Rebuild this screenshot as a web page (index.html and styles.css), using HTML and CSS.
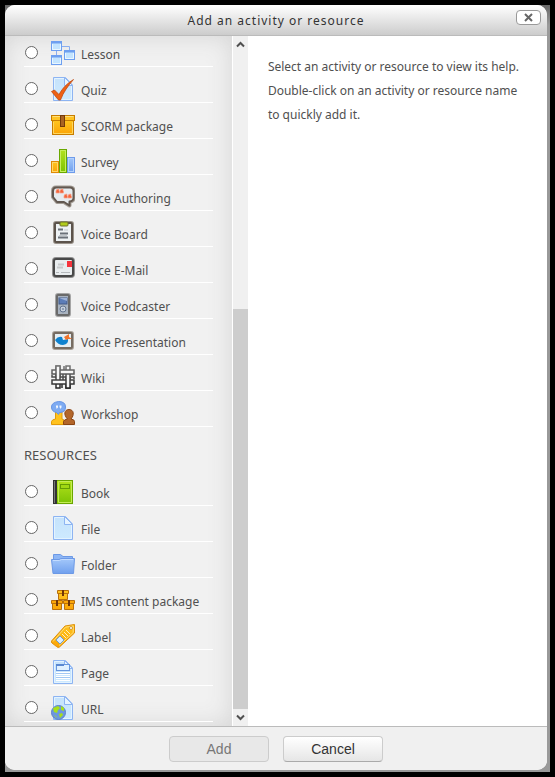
FILE: index.html
```html
<!DOCTYPE html>
<html lang="en">

<head>
    <meta charset="UTF-8">
    <meta name="viewport" content="width=device-width, initial-scale=1.0">
    <title>Add an activity or resource</title>
    <link rel="stylesheet" href="styles.css">
</head>

<body>
    <svg class="defs" aria-hidden="true">
        <defs>
            <linearGradient id="blue" x2="0" y2="1">
                <stop offset="0" stop-color="#c5e2fb" />
                <stop offset="1" stop-color="#cdeaff" />
            </linearGradient>
            <linearGradient id="orange" x2="0" y2="1">
                <stop offset="0" stop-color="#ffc51f" />
                <stop offset="1" stop-color="#fba305" />
            </linearGradient>
            <linearGradient id="green" x2="0" y2="1">
                <stop offset="0" stop-color="#b4e31c" />
                <stop offset="1" stop-color="#7cc204" />
            </linearGradient>
            <linearGradient id="folder" x2="0" y2="1">
                <stop offset="0" stop-color="#a4c8fa" />
                <stop offset="1" stop-color="#70a0ee" />
            </linearGradient>
            <linearGradient id="weave" gradientUnits="userSpaceOnUse" x1="0" y1="0" x2="0" y2="24">
                <stop offset="0" stop-color="#777" />
                <stop offset="1" stop-color="#222" />
            </linearGradient>
            <g id="sheet">
                <path d="M2.500.5H14.500L21.500 8V23.500H2.500Z" fill="url(#blue)" stroke="#8db4f2" />
                <path d="M3.500 1.500H14M3.500 1.500V22.500H20.500V9" fill="none" stroke="#e3f3ff" />
                <path d="M13.500.5V8.500H21.500Z" fill="#e6f4ff" stroke="#8db4f2" />
            </g>
            <g id="window">
                <rect x=".5" y=".5" width="10" height="9" fill="#c3e4ff" stroke="#6e9ff0" />
                <path d="M1 1.500H10" stroke="#6e9ff0" stroke-width="2" />
                <path d="M1.500 3V8.500H9.500V3" fill="none" stroke="#e9f6ff" />
            </g>
        </defs>
    </svg>

    <div class="shade">
        <form class="dialog">
            <header class="titlebar">
                <h1>Add an activity or resource</h1>
                <button type="button" class="close" aria-label="Close">
                    <svg width="9" height="9" viewBox="0 0 9 9">
                        <path d="M1 1L8 8M8 1L1 8" stroke="#666" stroke-width="2" />
                    </svg>
                </button>
            </header>

            <main class="chooser">
                <div class="pane">
                    <div class="options">
                        <ul>
                            <li><label>
                                <input type="radio" name="module">
                                <svg class="icon" viewBox="0 0 24 24">
                                    <path d="M11 5.500H18.500V9M5.500 10V14" fill="none" stroke="#8aaef0" />
                                    <use href="#window" />
                                    <use href="#window" x="13" y="9" />
                                    <use href="#window" y="14" />
                                </svg>
                                <span>Lesson</span>
                            </label></li>
                            <li><label>
                                <input type="radio" name="module">
                                <svg class="icon" viewBox="0 0 24 24">
                                    <use href="#sheet" />
                                    <path d="M.5 14.500L3.500 13L8 17.500C12 10.500 16 6.500 22.500 2.500C17 9 12.500 15 9.500 23H7.500Z" fill="#ee6115" stroke="#b9440a" stroke-width=".7" />
                                </svg>
                                <span>Quiz</span>
                            </label></li>
                            <li><label>
                                <input type="radio" name="module">
                                <svg class="icon" viewBox="0 0 24 24">
                                    <rect x="1.500" y="7.500" width="21" height="14" fill="url(#orange)" stroke="#c77d00" />
                                    <path d="M2.500 9V20.500H21.500V9" fill="none" stroke="#ffd760" />
                                    <rect x=".5" y="2.500" width="23" height="5" fill="#ffc425" stroke="#c77d00" />
                                    <path d="M1.500 3.500H22.500" stroke="#ffe07c" />
                                    <rect x="9.500" y="2.500" width="4" height="11" fill="#a96322" stroke="#743b0b" />
                                </svg>
                                <span>SCORM package</span>
                            </label></li>
                            <li><label>
                                <input type="radio" name="module">
                                <svg class="icon" viewBox="0 0 24 24">
                                    <rect x=".5" y="12.500" width="7" height="11" fill="url(#orange)" stroke="#e08a04" />
                                    <rect x="1.500" y="13.500" width="5" height="9" fill="none" stroke="#ffd96b" />
                                    <rect x="16.500" y="8.500" width="7" height="15" fill="url(#folder)" stroke="#6e9bea" />
                                    <rect x="17.500" y="9.500" width="5" height="13" fill="none" stroke="#b5d2fc" />
                                    <rect x="8.500" y=".5" width="7" height="23" fill="url(#green)" stroke="#6aa800" />
                                    <rect x="9.500" y="1.500" width="5" height="21" fill="none" stroke="#c7ef5b" />
                                </svg>
                                <span>Survey</span>
                            </label></li>
                            <li><label>
                                <input type="radio" name="module">
                                <svg class="icon" viewBox="0 0 24 24">
                                    <path d="M5 2.500H19Q22.500 2.500 22.500 6V13Q22.500 16 18.500 16.500V20.500L13 17H6L2 12V6Q2 2.500 5 2.500Z" fill="#e6ebee" stroke="#a39c94" stroke-width="4" stroke-linejoin="round" />
                                    <path d="M5 2.500H19Q22.500 2.500 22.500 6V13Q22.500 16 18.500 16.500V20.500L13 17H6L2 12V6Q2 2.500 5 2.500Z" fill="#e6ebee" stroke="#625850" stroke-width="2" stroke-linejoin="round" />
                                    <path d="M5 6Q5 4 8 4V6H8.500V8H5ZM9 6Q9 4 12 4V6H12.500V8H9ZM13 11Q13 9 16 9V11H16.500V13H13ZM17 11Q17 9 20 9V11H20.500V13H17Z" fill="#f4663c" stroke="#f7a58c" stroke-width=".7" />
                                </svg>
                                <span>Voice Authoring</span>
                            </label></li>
                            <li><label>
                                <input type="radio" name="module">
                                <svg class="icon" viewBox="0 0 24 24">
                                    <rect x="4" y="2" width="17" height="19" rx="1" fill="#eef2f4" stroke="#9a938b" stroke-width="4" />
                                    <rect x="4" y="2" width="17" height="19" rx="1" fill="#eef2f4" stroke="#5c534b" stroke-width="2" />
                                    <rect x="9" y="1" width="8" height="4" rx="1" fill="#b1cc1c" stroke="#6c702e" />
                                    <path d="M7 8.500H12M9 12.500H17M7 16.500H17" stroke="#6a7179" stroke-width="2" />
                                    <path d="M13 9H17M8 14.500H16" stroke="#c0c6cb" />
                                </svg>
                                <span>Voice Board</span>
                            </label></li>
                            <li><label>
                                <input type="radio" name="module">
                                <svg class="icon" viewBox="0 0 24 24">
                                    <rect x="3" y="2" width="19" height="17" rx="2" fill="#e9edef" stroke="#8f8f8f" stroke-width="4" />
                                    <rect x="3" y="2" width="19" height="17" rx="2" fill="#e9edef" stroke="#484848" stroke-width="2" />
                                    <path d="M7 7.500H13M6 10.500H12" stroke="#c6c9cb" stroke-width="2" />
                                    <path d="M5 15.500H8M10 15.500H19" stroke="#b5b9bc" />
                                    <rect x="16" y="4" width="5" height="6" fill="#f5333c" />
                                </svg>
                                <span>Voice E-Mail</span>
                            </label></li>
                            <li><label>
                                <input type="radio" name="module">
                                <svg class="icon" viewBox="0 0 24 24">
                                    <rect x="6" y="2" width="12" height="20" rx="1" fill="#a9b3c0" stroke="#a5a5a5" stroke-width="4" />
                                    <rect x="6" y="2" width="12" height="20" rx="1" fill="#a9b3c0" stroke="#6a6a6a" stroke-width="2" />
                                    <rect x="8" y="5" width="8" height="6" fill="#5c7db8" stroke="#455c88" />
                                    <path d="M8 5L16 8V5Z" fill="#9db2d8" />
                                    <circle cx="12" cy="16" r="3" fill="#c8d1dd" stroke="#62748f" />
                                    <circle cx="12" cy="16" r="1" fill="#7b8ca6" />
                                </svg>
                                <span>Voice Podcaster</span>
                            </label></li>
                            <li><label>
                                <input type="radio" name="module">
                                <svg class="icon" viewBox="0 0 24 24">
                                    <rect x="3" y="4" width="18" height="15" rx="1" fill="#e6eef2" stroke="#aaa39b" stroke-width="4" />
                                    <rect x="3" y="4" width="18" height="15" rx="1" fill="#e6eef2" stroke="#766c62" stroke-width="2" />
                                    <path d="M4 11Q7 7 11 8L12 11L17 10Q18 15 12 16Q7 16 4 11Z" fill="#0e82cf" />
                                    <path d="M13 8L18 5V8L21 10H17L15 11Z" fill="#f2742b" />
                                </svg>
                                <span>Voice Presentation</span>
                            </label></li>
                            <li><label>
                                <input type="radio" name="module">
                                <svg class="icon" viewBox="0 0 24 24">
                                    <g fill="#f8f8f8" stroke="url(#weave)" stroke-width="1.500">
                                        <rect x="5" y="1" width="4" height="22" />
                                        <rect x="15" y="1" width="4" height="22" />
                                        <rect x="1" y="5" width="22" height="4" />
                                        <rect x="1" y="15" width="22" height="4" />
                                        <path d="M5 13V1H9V13" />
                                        <path d="M15 11V23H19V11" />
                                        <path d="M1 10V12H5M9 12H15M19 12H23V14M12 9V15" fill="none" />
                                        <path d="M11 19V23M13 1V5" fill="none" />
                                    </g>
                                </svg>
                                <span>Wiki</span>
                            </label></li>
                            <li><label>
                                <input type="radio" name="module">
                                <svg class="icon" viewBox="0 0 24 24">
                                    <path d="M.5 23.500V20.500Q1 18.500 4.500 18V10H11V18L13 19V23.500Z" fill="#ffc21f" stroke="#e29b09" />
                                    <path d="M12.500 23.500V20.500Q13 18.500 16.500 18C12.500 14 13 8.500 18 8.500S23.500 14 20 18Q23.500 18.500 23.500 20.500V23.500Z" fill="#b3662a" stroke="#8b4513" />
                                    <path d="M7.500.5Q14.500.5 14.500 6T8.500 11.500L7.500 13.500L5.500 11.500Q.5 10.500.5 6T7.500.5Z" fill="#7eabf2" stroke="#6593e4" />
                                    <path d="M5 4.500H7V6.500L5.500 8V6.500H5ZM8.500 4.500H10.500V6.500L9 8V6.500H8.500Z" fill="#f2f8ff" />
                                </svg>
                                <span>Workshop</span>
                            </label></li>
                        </ul>

                        <h2>RESOURCES</h2>
                        <ul>
                            <li><label>
                                <input type="radio" name="module">
                                <svg class="icon" viewBox="0 0 24 24">
                                    <rect x="2.500" y=".5" width="19" height="23" fill="url(#green)" stroke="#6ba600" />
                                    <path d="M7.500 1.500H20.500V22.500H7.500Z" fill="none" stroke="#c4ec55" />
                                    <rect x="2" width="4" height="24" fill="#333" />
                                    <path d="M3.500 1V23" stroke="#777" />
                                    <rect x="9.500" y="4.500" width="9" height="4" fill="#a1d814" stroke="#659d04" />
                                </svg>
                                <span>Book</span>
                            </label></li>
                            <li><label>
                                <input type="radio" name="module">
                                <svg class="icon" viewBox="0 0 24 24">
                                    <use href="#sheet" />
                                </svg>
                                <span>File</span>
                            </label></li>
                            <li><label>
                                <input type="radio" name="module">
                                <svg class="icon" viewBox="0 0 24 24">
                                    <path d="M2.500 20V2.500H9.500L12 4.500H21.500V20Z" fill="#8db6f5" stroke="#6c99e6" />
                                    <path d="M.5 7.500H8L10 6.500H23.500L22.500 21.500H2Z" fill="url(#folder)" stroke="#6c99e6" />
                                    <path d="M2 8.500H8.500L10.500 7.500H22" fill="none" stroke="#c3dcff" />
                                </svg>
                                <span>Folder</span>
                            </label></li>
                            <li><label>
                                <input type="radio" name="module">
                                <svg class="icon" viewBox="0 0 24 24">
                                    <g fill="url(#orange)" stroke="#b9700c">
                                        <path d="M7.500 5.500H16.500V11.500H7.500ZM1.500 15.500H10.500V21.500H1.500ZM13.500 15.500H22.500V21.500H13.500Z" />
                                        <path d="M6.500 2.500H17.500V5.500H6.500ZM.5 12.500H11.500V15.500H.5ZM12.500 12.500H23.500V15.500H12.500Z" />
                                    </g>
                                    <path d="M11 2H13V8H11ZM5 12H7V18H5ZM17 12H19V18H17Z" fill="#713608" />
                                </svg>
                                <span>IMS content package</span>
                            </label></li>
                            <li><label>
                                <input type="radio" name="module">
                                <svg class="icon" viewBox="0 0 24 24">
                                    <path d="M.5 17L14 2L23.500.5V9L8.500 23Q7 24 5.500 22.500L1 19Q0 18 .5 17Z" fill="url(#orange)" stroke="#df900b" />
                                    <path d="M2 17.500L14.500 3.200L22.200 2V8.500L8 21.500" fill="none" stroke="#ffdf79" />
                                    <circle cx="20" cy="4" r="1.500" fill="#fff" stroke="#bd7b14" stroke-width=".7" />
                                    <path d="M5 16L9 12L13 16L9 20Z" fill="#dceeff" stroke="#709cc9" />
                                    <path d="M11 10L15 14M13 8L17 12M15 6L19 10" stroke="#fff1bd" />
                                </svg>
                                <span>Label</span>
                            </label></li>
                            <li><label>
                                <input type="radio" name="module">
                                <svg class="icon" viewBox="0 0 24 24">
                                    <use href="#sheet" />
                                    <path d="M5 12.500H19M5 14.500H19M5 16.500H19M5 18.500H19M5 20.500H19" stroke="#fff" />
                                    <path d="M5 13.500H19M5 17.500H19" stroke="#a2c8f3" />
                                    <rect x="5.500" y="4.500" width="13" height="6" fill="#e0f1ff" stroke="#6797df" />
                                    <path d="M5 5H13" stroke="#5a88d1" stroke-width="2" />
                                </svg>
                                <span>Page</span>
                            </label></li>
                            <li><label>
                                <input type="radio" name="module">
                                <svg class="icon" viewBox="0 0 24 24">
                                    <use href="#sheet" />
                                    <circle cx="7.500" cy="16.500" r="7" fill="#6c97df" stroke="#5c83c6" />
                                    <path d="M2 12L7 10L9 12L7 14L6 17L3 16ZM10 10L13 12V15L10 14ZM8 18L11 17L12 19L9 22ZM3 19L5 20L6 22Z" fill="#a7e019" />
                                </svg>
                                <span>URL</span>
                            </label></li>
                        </ul>
                    </div>

                    <div class="scrollbar" aria-hidden="true">
                        <svg viewBox="0 0 15 17"><path d="M4 10.500L7.500 7L11 10.500" /></svg>
                        <div class="track">
                            <div class="thumb"></div>
                        </div>
                        <svg viewBox="0 0 15 17"><path d="M4 6.500L7.500 10L11 6.500" /></svg>
                    </div>
                </div>

                <div class="help">
                    <p>Select an activity or resource to view its help. Double-click on an activity or resource name to quickly add it.</p>
                </div>
            </main>

            <footer class="buttons">
                <button type="submit" disabled>Add</button>
                <button type="button">Cancel</button>
            </footer>
        </form>
    </div>
</body>

</html>
```

FILE: styles.css
```css
* {
    box-sizing: border-box;
}

body {
    margin: 0;
    height: 100vh;
    padding: 5px;
    background: #000;
    color: #505050;
    font-family: "Trebuchet MS", "Noto Sans", sans-serif;
    font-size: 12px;
}

.defs {
    position: absolute;
    width: 0;
    height: 0;
}

/* grey edge showing round the rounded dialog */
.shade {
    height: 100%;
    padding: 0 3px 2px 0;
    background: linear-gradient(#666, #999 20px);
}

.dialog {
    height: 100%;
    display: flex;
    flex-direction: column;
    background: #fff;
    border-radius: 10px;
    overflow: hidden;
}

.titlebar {
    position: relative;
    flex: none;
    height: 31px;
    display: flex;
    align-items: center;
    justify-content: center;
    background: linear-gradient(#fff, #ccc);
    border-bottom: 1px solid #bbb;
}

.titlebar h1 {
    margin: 0;
    color: #333;
    font-size: 12px;
    font-weight: normal;
    letter-spacing: 1px;
}

.close {
    position: absolute;
    top: 5px;
    right: 6px;
    width: 25px;
    height: 15px;
    padding: 0;
    display: flex;
    align-items: center;
    justify-content: center;
    background: #fff;
    border: 1px solid #999;
    border-radius: 4px;
}

.chooser {
    flex: 1;
    min-height: 0;
    display: flex;
}

.pane {
    width: 45%;
    flex: none;
    display: flex;
    background: #f1f1f1;
}

.options {
    flex: 1;
    overflow: hidden;
    padding: 0 19px;
    box-shadow: inset 0 0 24px #d4d4d4;
}

.options ul {
    list-style: none;
    margin: 0;
    padding: 0;
}

/* the list is scrolled a little past the top of its first row */
.options ul:first-child {
    margin-top: -5px;
}

.options li {
    height: 36px;
    border-bottom: 1px solid #fff;
}

.options label {
    height: 35px;
    padding-top: 8px;
    display: flex;
    align-items: center;
}

.options input {
    appearance: none;
    width: 13px;
    height: 13px;
    margin: 0 13px 0 1px;
    background: #fff;
    border: 1px solid #666;
    border-radius: 50%;
}

.options input:checked {
    background: radial-gradient(#444 3px, #fff 4px);
}

.icon {
    width: 24px;
    height: 24px;
    margin-right: 6px;
}

.options span {
    padding-top: 4px;
    line-height: 20px;
    white-space: nowrap;
}

.options h2 {
    margin: 18px 0 5px;
    font-size: 13px;
    font-weight: normal;
    line-height: 20px;
}

.scrollbar {
    width: 17px;
    flex: none;
    display: flex;
    flex-direction: column;
    background: #f0f0f0;
    border: solid #fff;
    border-width: 0 1px;
}

.scrollbar svg {
    width: 15px;
    height: 17px;
    fill: none;
    stroke: #505050;
    stroke-width: 2;
}

.track {
    flex: 1;
    display: flex;
    flex-direction: column;
    justify-content: flex-end;
}

.thumb {
    height: 61%;
    background: #cdcdcd;
}

.help {
    flex: 1;
    padding: 19px;
}

.help p {
    margin: 0;
    line-height: 24px;
}

.buttons {
    flex: none;
    height: 44px;
    display: flex;
    align-items: center;
    justify-content: center;
    gap: 14px;
    background: #f0f0f0;
    border-top: 1px solid #bbb;
}

.buttons button {
    width: 100px;
    height: 26px;
    padding: 0;
    background: linear-gradient(#fff, #e6e6e6);
    border: 1px solid #ccc;
    border-bottom-color: #aaa;
    border-radius: 4px;
    color: #333;
    font-family: "Liberation Sans", Arial, sans-serif;
    font-size: 14px;
}

.buttons button:disabled {
    background: #e8e8e8;
    border-color: #ccc;
    color: #777;
}
```
